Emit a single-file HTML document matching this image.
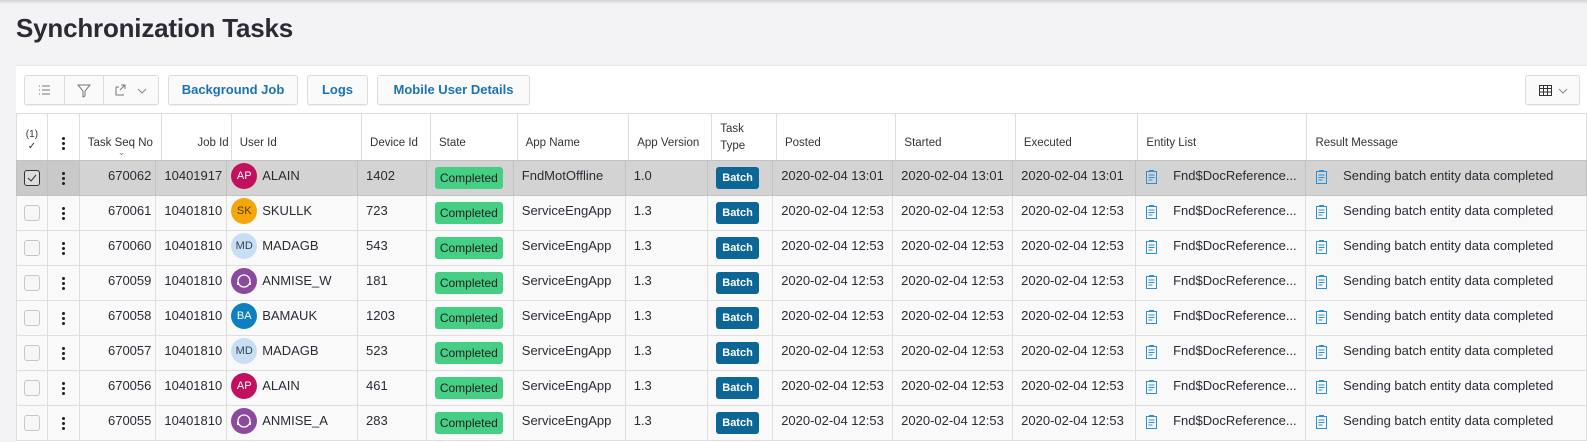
<!DOCTYPE html>
<html><head><meta charset="utf-8"><style>
*{box-sizing:border-box;margin:0;padding:0}
body{width:1587px;height:442px;background:#f3f2f5;font-family:"Liberation Sans",sans-serif;color:#2b2b35;overflow:hidden;position:relative}
.topshadow{position:absolute;left:0;top:0;width:1587px;height:4px;background:linear-gradient(#cfcfd2,#f3f2f5)}
h1{position:absolute;left:16px;top:13px;font-size:26px;font-weight:bold;color:#2b2b33;letter-spacing:-0.2px}
.card{position:absolute;left:16px;top:65px;width:1571px;height:377px;background:#fff;border-top:1px solid #e6e6e9}
.btn{position:absolute;top:9px;height:30px;border:1px solid #dcdce0;border-radius:3px;background:#fafafa;box-shadow:0 1px 1px rgba(0,0,0,.06);color:#1a73b8;font-size:13px;font-weight:bold;line-height:28px;text-align:center}
.grp div{position:absolute;top:0;height:28px;border-left:1px solid #dcdce0}
table{position:absolute;left:0;top:47px;border-collapse:collapse;table-layout:fixed;font-size:13px}
td,th{border:1px solid #dedede;height:35px;white-space:nowrap;overflow:hidden;padding:0 8px;vertical-align:middle}
td{line-height:26px}
td>div.in{position:relative;top:-2px;height:26px;overflow:hidden}
td.rt{padding-right:4px}
th{height:47px;font-weight:normal;font-size:11.5px;text-align:left;padding-top:12px;color:#333;background:#fff;border-top:1px solid #dedede}
tr.r td{background:#f9f9f9}
tr.sel td{background:#d3d3d3;border-color:#c2c2c2}
tr.sel td.c0,tr.sel td.c1{background:#c9c9c9}
.rt{text-align:right}
.cb{width:16px;height:16px;border:1px solid #c7c7c7;border-radius:3px;background:#f6f6f6;margin:0 auto}
.sel .cb{border-color:#333;background:#ddd}
.dots{width:3px;margin:0 auto;text-align:center;font-size:0;line-height:0}
.dots i{display:block;width:3px;height:3px;background:#222;border-radius:50%;margin:2px 0}
.av{display:inline-block;width:26px;height:26px;border-radius:50%;vertical-align:top;text-align:center;line-height:26px;font-size:11px;color:#fff;margin-right:5px}
.badge{display:inline-block;background:#45cf85;border-radius:3px;color:#222;font-size:12px;height:22px;line-height:22px;padding:0 5px;position:relative;top:4px;vertical-align:top}
.batch{display:inline-block;background:#0d6796;border-radius:3px;color:#fff;font-size:11px;font-weight:bold;height:22px;line-height:22px;padding:0 6px;position:relative;top:4px;vertical-align:top}
.doc{display:inline-block;vertical-align:middle;margin-right:16px}
td.ic{padding-left:10px}
</style></head><body>
<div class="topshadow"></div>
<h1>Synchronization Tasks</h1>
<div class="card">
 <div class="btn grp" style="left:8px;width:135px">
  <div style="left:0;border:none;width:39px"><svg width="39" height="28"><g stroke="#777" stroke-width="1" fill="none"><path d="M14 10h1M14 14h1M14 18h1M17 10h8M17 14h8M17 18h8"/></g></svg></div>
  <div style="left:39px;width:39px"><svg width="39" height="28"><path d="M13 9h12l-5 6v5l-2 1v-6z" fill="none" stroke="#777"/></svg></div>
  <div style="left:78px;width:56px"><svg width="56" height="28"><path d="M12 11v8h8M15 11h-3M17 9h4v4M21 9l-5 5" fill="none" stroke="#777"/><path d="M34 13l4 4 4-4" fill="none" stroke="#888"/></svg></div>
 </div>
 <div class="btn" style="left:152px;width:130px">Background Job</div>
 <div class="btn" style="left:291px;width:61px">Logs</div>
 <div class="btn" style="left:361px;width:153px">Mobile User Details</div>
 <div class="btn" style="left:1509px;width:55px"><svg width="53" height="28"><g fill="none" stroke="#333"><rect x="13.5" y="9.5" width="12" height="10"/><path d="M13.5 12.5h12M13.5 16h12M17.5 9.5v10M21.5 9.5v10"/></g><path d="M33 13l4 4 4-4" fill="none" stroke="#888"/></svg></div>
<table>
<colgroup><col style="width:31px"><col style="width:32px"><col style="width:77px"><col style="width:70px"><col style="width:131px"><col style="width:69px"><col style="width:87px"><col style="width:112px"><col style="width:83px"><col style="width:65px"><col style="width:120px"><col style="width:120px"><col style="width:123px"><col style="width:170px"><col style="width:281px"></colgroup>
<tr><th style="text-align:center;padding:8px 0 0;font-size:10px;line-height:12px">(1)<br>✓</th><th><div class="dots"><i></i><i></i><i></i></div></th><th class="rt" style="position:relative">Task Seq No<span style="position:absolute;left:38px;top:33px;font-size:9px;color:#777">⌄</span></th><th class="rt" style="padding-right:2px">Job Id</th><th>User Id</th><th>Device Id</th><th>State</th><th>App Name</th><th>App Version</th><th style="padding-top:2px;line-height:17px">Task<br>Type</th><th>Posted</th><th>Started</th><th>Executed</th><th>Entity List</th><th>Result Message</th></tr>
</table>
<table id="b" style="top:94px"></table>
</div>
<script>
var rows=[["670062","10401917","AP","#c2105f","ALAIN","1402","FndMotOffline","1.0","13:01",1],
["670061","10401810","SK","#f5a60b","SKULLK","723","ServiceEngApp","1.3","12:53"],
["670060","10401810","MD","#c7def5","MADAGB","543","ServiceEngApp","1.3","12:53"],
["670059","10401810","w","#8c4a9e","ANMISE_W","181","ServiceEngApp","1.3","12:53"],
["670058","10401810","BA","#0e80c2","BAMAUK","1203","ServiceEngApp","1.3","12:53"],
["670057","10401810","MD","#c7def5","MADAGB","523","ServiceEngApp","1.3","12:53"],
["670056","10401810","AP","#c2105f","ALAIN","461","ServiceEngApp","1.3","12:53"],
["670055","10401810","a","#8c4a9e","ANMISE_A","283","ServiceEngApp","1.3","12:53"]];
var doc='<svg class="doc" width="11" height="14"><g fill="none" stroke="#2b8fd6"><rect x="0.5" y="1.5" width="10" height="12"/><path d="M3 0.5h5M2.5 5h6M2.5 7.5h6M2.5 10h4"/></g></svg>';
var h='<colgroup><col style="width:31px"><col style="width:32px"><col style="width:77px"><col style="width:70px"><col style="width:131px"><col style="width:69px"><col style="width:87px"><col style="width:112px"><col style="width:83px"><col style="width:65px"><col style="width:120px"><col style="width:120px"><col style="width:123px"><col style="width:170px"><col style="width:281px"></colgroup>';
function c(x,cls,st){return '<td'+(cls?' class="'+cls+'"':'')+(st?' style="'+st+'"':'')+'><div class="in">'+x+'</div></td>';}
rows.forEach(function(r){
 var av;
 if(r[2]=="w"||r[2]=="a") av='<span class="av" style="background:'+r[3]+'"><svg width="26" height="26" style="vertical-align:top"><circle cx="13" cy="13" r="6" fill="none" stroke="#fff" stroke-width="1.3"/><path d="M7 14v3M19 14v3" stroke="#fff" stroke-width="2"/></svg></span>';
 else av='<span class="av" style="background:'+r[3]+';color:'+(r[2]=="SK"?"#5a3a00":r[2]=="MD"?"#345":"#fff")+'">'+r[2]+'</span>';
 var d='2020-02-04 '+r[8];
 h+='<tr class="'+(r[9]?'sel':'r')+'"><td class="c0" style="padding:0"><div class="cb">'+(r[9]?'<svg width="14" height="14" style="display:block"><path d="M3 7l3 3 5-6" fill="none" stroke="#333"/></svg>':'')+'</div></td><td class="c1" style="padding:0"><div class="dots"><i></i><i></i><i></i></div></td>'
 +c(r[0],'rt')+c(r[1],'rt')+c(av+r[4],'','padding-left:4px')+c(r[5])+c('<span class="badge">Completed</span>')+c(r[6])+c(r[7])+c('<span class="batch">Batch</span>')+c(d)+c(d)+c(d)+c(doc+'Fnd$DocReference...','ic')+c(doc+'Sending batch entity data completed','ic')+'</tr>';
});
document.getElementById('b').innerHTML=h;
</script>
</body></html>
